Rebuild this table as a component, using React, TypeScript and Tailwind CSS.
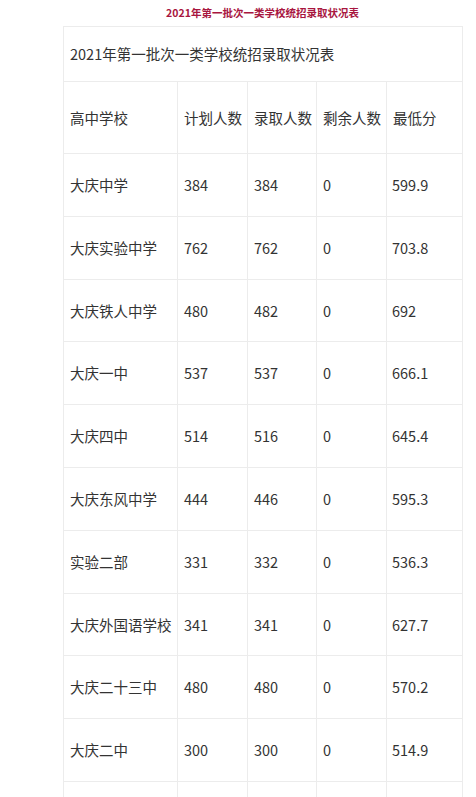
import React from "react";

const rows: string[][] = [
  ["大庆中学", "384", "384", "0", "599.9"],
  ["大庆实验中学", "762", "762", "0", "703.8"],
  ["大庆铁人中学", "480", "482", "0", "692"],
  ["大庆一中", "537", "537", "0", "666.1"],
  ["大庆四中", "514", "516", "0", "645.4"],
  ["大庆东风中学", "444", "446", "0", "595.3"],
  ["实验二部", "331", "332", "0", "536.3"],
  ["大庆外国语学校", "341", "341", "0", "627.7"],
  ["大庆二十三中", "480", "480", "0", "570.2"],
  ["大庆二中", "300", "300", "0", "514.9"],
  ["", "", "", "", ""],
];

const widths = ["w-[114px]", "w-[70px]", "w-[69px]", "w-[70px]", "w-[76px]"];

export default function App() {
  return (
    <div
      className="w-[476px] h-[797px] overflow-hidden bg-white"
      style={{ fontFamily: '"Noto Sans CJK SC", "Noto Sans", sans-serif' }}
    >
      <div className="ml-[63px] w-[399px]">
        <div className="h-[26px] flex items-center justify-center text-[10.5px] font-bold text-[#a8163f] pb-[1px]">
          2021年第一批次一类学校统招录取状况表
        </div>
        <table className="w-[399px] border-collapse table-fixed text-[#333] text-[14.5px]">
          <colgroup>
            {widths.map((w, i) => (
              <col key={i} className={w} />
            ))}
          </colgroup>
          <tbody>
            <tr className="h-[55px]">
              <td colSpan={5} className="border border-[#ececec] px-[6px] whitespace-nowrap">
                2021年第一批次一类学校统招录取状况表
              </td>
            </tr>
            <tr className="h-[72px]">
              {["高中学校", "计划人数", "录取人数", "剩余人数", "最低分"].map((h, i) => (
                <td key={i} className="border border-[#ececec] px-[6px] whitespace-nowrap">
                  {h}
                </td>
              ))}
            </tr>
            {rows.map((r, ri) => (
              <tr key={ri} className="h-[62.8px]">
                {r.map((c, ci) => (
                  <td
                    key={ci}
                    className={`border border-[#ececec] whitespace-nowrap ${ci === 4 ? "pl-[5px]" : "pl-[6px]"}`}
                  >
                    {c}
                  </td>
                ))}
              </tr>
            ))}
          </tbody>
        </table>
      </div>
    </div>
  );
}
